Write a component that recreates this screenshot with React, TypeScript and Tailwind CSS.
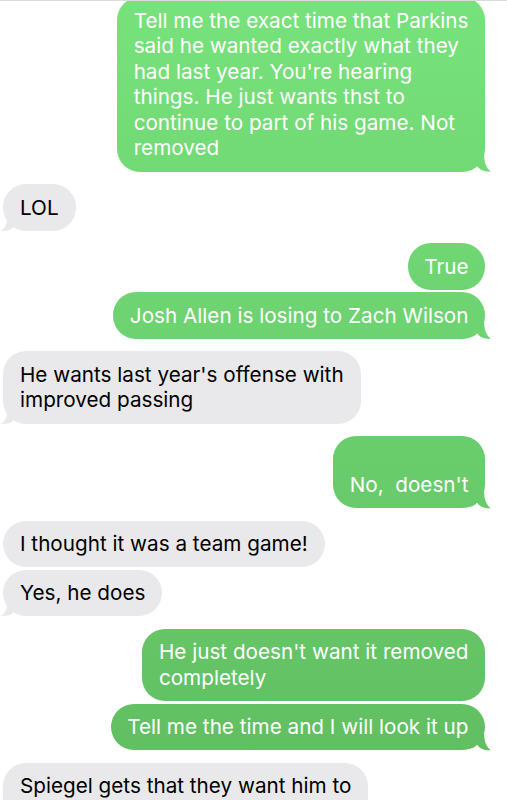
const tailPath =
  "[clip-path:path('M0_0H19V6C19_14_21_21_26_24C21_24.6_15_23_12_18.5C9_22_5_23_0_23Z')]"

type Msg = {
  me: boolean
  lines: string[]
  tail?: boolean
  gap: 'first' | 'group' | 'tight'
}

const messages: Msg[] = [
  {
    me: true,
    gap: 'first',
    tail: true,
    lines: [
      'Tell me the exact time that Parkins',
      'said he wanted exactly what they',
      "had last year. You're hearing",
      'things. He just wants thst to',
      'continue to part of his game. Not',
      'removed',
    ],
  },
  { me: false, gap: 'group', tail: true, lines: ['LOL'] },
  { me: true, gap: 'group', lines: ['True'] },
  { me: true, gap: 'tight', tail: true, lines: ['Josh Allen is losing to Zach Wilson'] },
  {
    me: false,
    gap: 'group',
    tail: true,
    lines: ["He wants last year's offense with", 'improved passing'],
  },
  { me: true, gap: 'group', tail: true, lines: ['\u00a0', "No,  doesn't"] },
  { me: false, gap: 'group', lines: ['I thought it was a team game!'] },
  { me: false, gap: 'tight', tail: true, lines: ['Yes, he does'] },
  {
    me: true,
    gap: 'group',
    lines: ["He just doesn't want it removed", 'completely'],
  },
  { me: true, gap: 'tight', tail: true, lines: ['Tell me the time and I will look it up'] },
  { me: false, gap: 'group', lines: ['Spiegel gets that they want him to', '\u00a0'] },
]

function Bubble({ msg }: { msg: Msg }) {
  const margin =
    msg.gap === 'first' ? '-mt-[4px]' : msg.gap === 'group' ? 'mt-[12.5px]' : 'mt-[2.5px]'

  if (msg.me) {
    return (
      <div className={`flex justify-end pr-[22px] ${margin}`}>
        <div className="relative">
          {msg.tail && (
            <div
              className={`absolute bottom-[-1px] right-[-7px] h-[25px] w-[27px] bg-fixed bg-linear-to-b from-[#77e27b] to-[#60bd61] ${tailPath}`}
            />
          )}
          <div className="relative whitespace-pre rounded-[23px] bg-fixed bg-linear-to-b from-[#77e27b] to-[#60bd61] px-[16.5px] py-[10.5px] text-[20.7px] leading-[25.6px] text-white">
            {msg.lines.map((l, i) => (
              <div key={i}>{l}</div>
            ))}
          </div>
        </div>
      </div>
    )
  }

  return (
    <div className={`flex justify-start pl-[3px] ${margin}`}>
      <div className="relative">
        {msg.tail && (
          <svg
            className="absolute bottom-[-1px] left-[-3px] h-[25px] w-[27px]"
            viewBox="0 0 27 25"
          >
            <path
              d="M27 0H8V6C8 14 6 21 1 24C6 24.6 12 23 15 18.5C18 22 22 23 27 23Z"
              fill="#e9e9eb"
            />
          </svg>
        )}
        <div className="relative whitespace-pre rounded-[23px] bg-[#e9e9eb] px-[17px] py-[10.5px] text-[20.7px] leading-[25.6px] text-black">
          {msg.lines.map((l, i) => (
            <div key={i}>{l}</div>
          ))}
        </div>
      </div>
    </div>
  )
}

export default function App() {
  return (
    <div className="h-[800px] overflow-hidden border-t border-[#dcdcdc] bg-white font-['Inter',sans-serif] antialiased">
      {messages.map((m, i) => (
        <Bubble key={i} msg={m} />
      ))}
    </div>
  )
}
